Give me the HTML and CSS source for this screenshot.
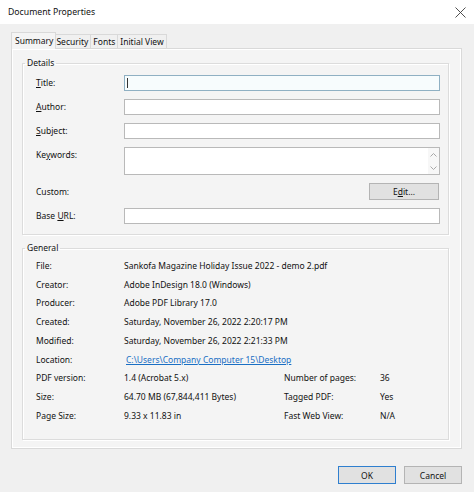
FILE: index.html
```html
<!DOCTYPE html>
<html lang="en">
<head>
    <meta charset="UTF-8">
    <meta name="viewport" content="width=device-width, initial-scale=1.0">
    <title>Document Properties</title>
    <link rel="stylesheet" href="styles.css">
</head>
<body>
    <div class="titlebar">
        <span class="titlebar-text">Document Properties</span>
        <svg class="close-icon" width="11" height="11" viewBox="0 0 11 11">
            <path d="M0.5 0.5 L10.5 10.5 M10.5 0.5 L0.5 10.5" stroke="#3c3c3c" stroke-width="0.9" fill="none"/>
        </svg>
    </div>

    <div class="dialog">
        <div class="tabs">
            <div class="tab tab-active">Summary</div>
            <div class="tab">Security</div>
            <div class="tab">Fonts</div>
            <div class="tab">Initial View</div>
        </div>

        <div class="panel">
            <fieldset class="group group-details">
                <legend>Details</legend>
                <div class="fields">
                    <label class="label"><u>T</u>itle:</label>
                    <div class="box box-focus"><span class="caret"></span></div>

                    <label class="label"><u>A</u>uthor:</label>
                    <div class="box"></div>

                    <label class="label"><u>S</u>ubject:</label>
                    <div class="box"></div>

                    <label class="label label-top">Ke<u>y</u>words:</label>
                    <div class="box box-tall">
                        <div class="scrollbar">
                            <svg width="7" height="4" viewBox="0 0 7 4"><path d="M0.5 3.5 L3.5 0.5 L6.5 3.5" stroke="#a8a8a8" fill="none"/></svg>
                            <svg width="7" height="4" viewBox="0 0 7 4"><path d="M0.5 0.5 L3.5 3.5 L6.5 0.5" stroke="#a8a8a8" fill="none"/></svg>
                        </div>
                    </div>

                    <label class="label">Custom:</label>
                    <button class="button button-edit">E<u>d</u>it...</button>

                    <label class="label">Base <u>U</u>RL:</label>
                    <div class="box"></div>
                </div>
            </fieldset>

            <fieldset class="group group-general">
                <legend>General</legend>
                <div class="info">
                    <span>File:</span>
                    <span class="wide">Sankofa Magazine Holiday Issue 2022 - demo 2.pdf</span>

                    <span>Creator:</span>
                    <span class="wide">Adobe InDesign 18.0 (Windows)</span>

                    <span>Producer:</span>
                    <span class="wide">Adobe PDF Library 17.0</span>

                    <span>Created:</span>
                    <span class="wide">Saturday, November 26, 2022 2:20:17 PM</span>

                    <span>Modified:</span>
                    <span class="wide">Saturday, November 26, 2022 2:21:33 PM</span>

                    <span>Location:</span>
                    <span class="wide"><a class="link" href="#">C:\Users\Company Computer 15\Desktop</a></span>

                    <span>PDF version:</span>
                    <span>1.4 (Acrobat 5.x)</span>
                    <span>Number of pages:</span>
                    <span>36</span>

                    <span>Size:</span>
                    <span>64.70 MB (67,844,411 Bytes)</span>
                    <span>Tagged PDF:</span>
                    <span>Yes</span>

                    <span>Page Size:</span>
                    <span>9.33 x 11.83 in</span>
                    <span>Fast Web View:</span>
                    <span>N/A</span>
                </div>
            </fieldset>
        </div>

        <div class="actions">
            <button class="button button-default">OK</button>
            <button class="button">Cancel</button>
        </div>
    </div>
</body>
</html>
```

FILE: styles.css
```css
body {
    margin: 0;
    width: 474px;
    height: 496px;
    overflow: hidden;
    background-color: #fff;
    font-family: "Noto Sans", sans-serif;
    font-size: 8.5px;
    color: #111;
}

.titlebar {
    height: 24px;
    display: flex;
    align-items: center;
    justify-content: space-between;
    padding: 0 8px;
    background-color: #fff;
}

.titlebar-text {
    font-size: 8.7px;
}

.dialog {
    height: 468px;
    box-sizing: border-box;
    padding: 8px 12px 0 11px;
    background-color: #f0f0f0;
}

.tabs {
    display: flex;
    align-items: flex-end;
    height: 16px;
}

.tab {
    height: 14px;
    line-height: 13px;
    padding: 0 2px;
    box-sizing: border-box;
    border: 1px solid #d9d9d9;
    border-bottom: none;
    margin-left: -1px;
}

.tab-active {
    position: relative;
    z-index: 1;
    height: 17px;
    line-height: 15px;
    padding: 0 2px 0 3px;
    margin: 0 -2px -1px 0;
    background-color: #f4f4f4;
}

.panel {
    height: 401px;
    box-sizing: border-box;
    padding: 8px 12px 0 10px;
    border: 1px solid #d9d9d9;
    box-shadow: inset 0 0 0 1px #fff;
    background-color: #f4f4f4;
}

.group {
    margin: 0;
    border: 1px solid #dcdcdc;
    box-shadow: inset 1px 1px 0 #fff, 1px 1px 0 #fff;
}

.group legend {
    line-height: 12px;
    padding: 0 2px;
    margin-left: -11px;
}

.group-details {
    padding: 6px 8px 10px 13px;
}

.group-general {
    margin-top: 7px;
    padding: 2px 8px 14px 13px;
}

.fields {
    display: grid;
    grid-template-columns: 88px 1fr;
    row-gap: 8px;
    align-items: center;
}

.label {
    line-height: 16px;
}

.label-top {
    align-self: start;
}

.box {
    height: 16px;
    box-sizing: border-box;
    border: 1px solid #b9b9b9;
    background-color: #fff;
}

.box-focus {
    border-color: #8fb0c3;
    background-color: #f7fcfd;
    padding: 2px 0 0 2px;
}

.caret {
    display: block;
    width: 1px;
    height: 10px;
    background-color: #333;
}

.box-tall {
    height: 28px;
    display: flex;
    justify-content: flex-end;
}

.scrollbar {
    width: 11px;
    display: flex;
    flex-direction: column;
    justify-content: space-between;
    align-items: center;
    padding: 5px 0 4px;
    background-color: #f7f7f7;
}

.scrollbar svg {
    display: block;
}

.button {
    height: 17px;
    padding: 0;
    font-family: inherit;
    font-size: inherit;
    color: inherit;
    border: 1px solid #b4b4b4;
    background-color: #e1e1e1;
}

.button-edit {
    justify-self: end;
    width: 70px;
    margin-right: 1px;
}

.info {
    display: grid;
    grid-template-columns: 88px 160px 96px 1fr;
    grid-auto-rows: 18.75px;
    align-items: center;
}

.wide {
    grid-column: span 3;
}

.link {
    color: #1a6fc4;
    padding-left: 2px;
}

.actions {
    display: flex;
    justify-content: flex-end;
    gap: 8px;
    padding-top: 17px;
}

.actions .button {
    width: 58px;
    height: 18px;
}

.button-default {
    border-color: #2f7fcf;
}
```
